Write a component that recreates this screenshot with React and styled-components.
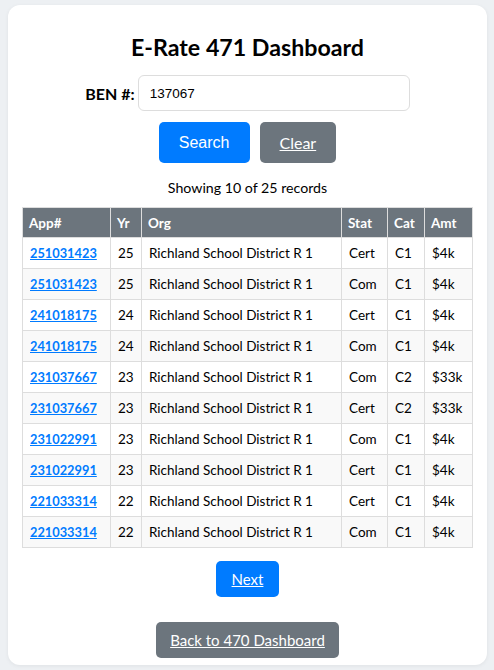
import React from "react";
import styled, { createGlobalStyle } from "styled-components";

const GlobalStyle = createGlobalStyle`
  html, body {
    margin: 0;
    padding: 0;
    background: #edf0f3;
  }
  body {
    font-family: "Lato", "Noto Sans", sans-serif;
    color: #000;
  }
`;

const Page = styled.div`
  padding: 5px 7px 4px 8px;
`;

const Card = styled.div`
  background: #fff;
  border-radius: 12px;
  padding: 20px 15px 7px;
  box-shadow: 0 1px 4px rgba(0, 0, 0, 0.06);
  display: flex;
  flex-direction: column;
  align-items: center;
`;

const Title = styled.h2`
  margin: 9px 0 15px;
  font-size: 23.2px;
  font-weight: 700;
  line-height: 26px;
`;

const SearchRow = styled.div`
  display: flex;
  align-items: center;
  gap: 3px;
`;

const Label = styled.label`
  font-weight: 700;
  font-size: 16px;
`;

const Input = styled.input`
  width: 272px;
  height: 36px;
  box-sizing: border-box;
  border: 1px solid #ddd;
  border-radius: 6px;
  padding: 0 11px;
  font-family: "Liberation Sans", Arial, sans-serif;
  font-size: 13.5px;
  color: #000;
  outline: none;
`;

const ButtonRow = styled.div`
  display: flex;
  gap: 10px;
  margin-top: 11px;
`;

const Button = styled.button`
  border: none;
  border-radius: 5px;
  color: #fff;
  background: ${(p) => (p.$variant === "gray" ? "#6c757d" : "#007bff")};
  height: ${(p) => p.$h || 36}px;
  padding: 0 ${(p) => p.$px || 20}px;
  font-family: ${(p) =>
    p.$arial ? '"Liberation Sans", Arial, sans-serif' : '"Lato", "Noto Sans", sans-serif'};
  font-size: ${(p) => p.$fs || 15}px;
  text-decoration: ${(p) => (p.$underline ? "underline" : "none")};
  cursor: pointer;
`;

const Count = styled.p`
  margin: 16px 0 10px;
  font-size: 14.2px;
  line-height: 18px;
`;

const Table = styled.table`
  width: 450px;
  border-collapse: collapse;
  font-size: 13.5px;
  table-layout: fixed;
`;

const Th = styled.th`
  background: #6c757d;
  color: #fff;
  font-weight: 700;
  text-align: left;
  height: 30px;
  padding: 0 6px;
  border: 1px solid #ddd;
  box-sizing: border-box;
`;

const Row = styled.tr`
  background: ${(p) => (p.$odd ? "#f9f9f9" : "#fff")};
`;

const Td = styled.td`
  height: 31px;
  padding: 0 6px 0 7px;
  border: 1px solid #ddd;
  box-sizing: border-box;
  white-space: nowrap;
`;

const AppLink = styled.a`
  color: #007bff;
  font-weight: 700;
  font-size: 12.8px;
  text-decoration: underline;
`;

const Next = styled(Button)`
  margin-top: 13px;
`;

const Back = styled(Button)`
  margin-top: 25px;
`;

const records = [
  ["251031423", "25", "Cert", "C1", "$4k"],
  ["251031423", "25", "Com", "C1", "$4k"],
  ["241018175", "24", "Cert", "C1", "$4k"],
  ["241018175", "24", "Com", "C1", "$4k"],
  ["231037667", "23", "Com", "C2", "$33k"],
  ["231037667", "23", "Cert", "C2", "$33k"],
  ["231022991", "23", "Com", "C1", "$4k"],
  ["231022991", "23", "Cert", "C1", "$4k"],
  ["221033314", "22", "Cert", "C1", "$4k"],
  ["221033314", "22", "Com", "C1", "$4k"],
];

const App = () => {
  return (
    <Page>
      <GlobalStyle />
      <Card>
        <Title>E-Rate 471 Dashboard</Title>
        <SearchRow>
          <Label htmlFor="ben">BEN #:</Label>
          <Input id="ben" defaultValue="137067" />
        </SearchRow>
        <ButtonRow>
          <Button $h={41} $px={20} $fs={16} $arial>
            Search
          </Button>
          <Button $variant="gray" $h={41} $px={20} $fs={16} $underline>
            Clear
          </Button>
        </ButtonRow>
        <Count>Showing 10 of 25 records</Count>
        <Table>
          <colgroup>
            <col style={{ width: 88 }} />
            <col style={{ width: 31 }} />
            <col style={{ width: 200 }} />
            <col style={{ width: 46 }} />
            <col style={{ width: 37 }} />
            <col style={{ width: 48 }} />
          </colgroup>
          <thead>
            <tr>
              <Th>App#</Th>
              <Th>Yr</Th>
              <Th>Org</Th>
              <Th>Stat</Th>
              <Th>Cat</Th>
              <Th>Amt</Th>
            </tr>
          </thead>
          <tbody>
            {records.map((r, i) => (
              <Row key={i} $odd={i % 2 === 1}>
                <Td>
                  <AppLink href="#">{r[0]}</AppLink>
                </Td>
                <Td>{r[1]}</Td>
                <Td>Richland School District R 1</Td>
                <Td>{r[2]}</Td>
                <Td>{r[3]}</Td>
                <Td>{r[4]}</Td>
              </Row>
            ))}
          </tbody>
        </Table>
        <Next $h={36} $px={16} $fs={15} $underline>
          Next
        </Next>
        <Back $variant="gray" $h={36} $px={14} $fs={15} $underline>
          Back to 470 Dashboard
        </Back>
      </Card>
    </Page>
  );
};

export default App;
